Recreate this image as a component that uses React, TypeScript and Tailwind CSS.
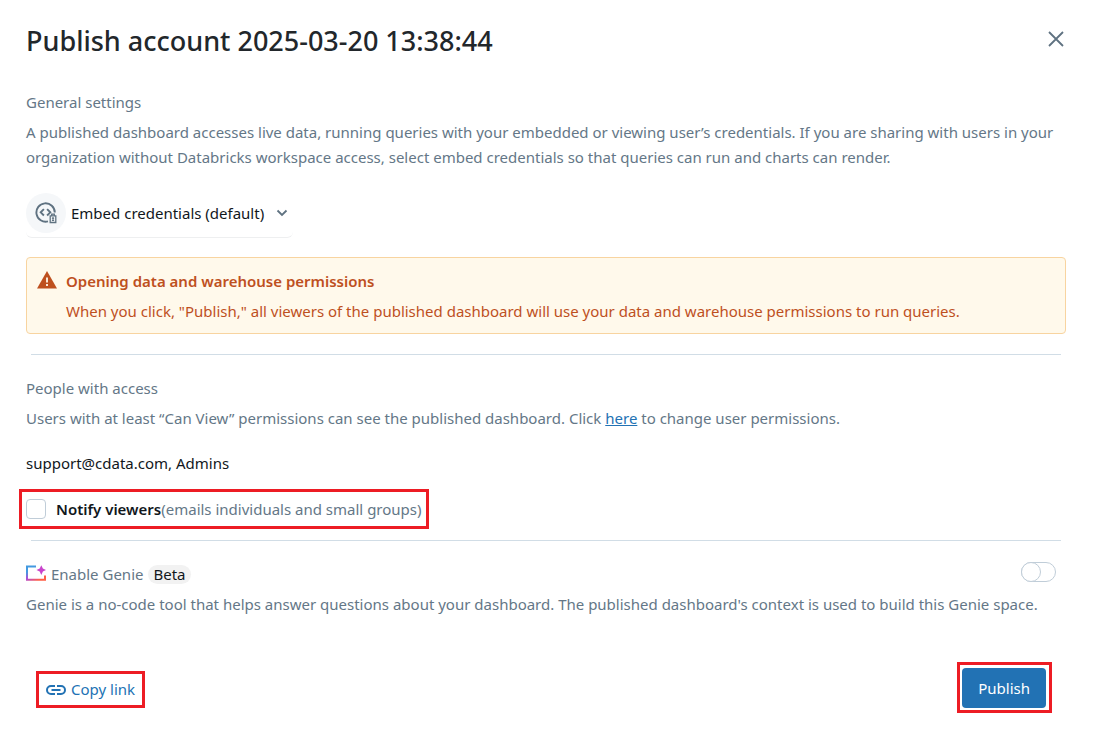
import React, { useState } from "react";

function CredentialsIcon() {
  return (
    <svg width="22" height="22" viewBox="0 0 22 22" fill="none" stroke="#5f7281" strokeWidth="1.9" aria-hidden="true">
      <path d="M13 19.4A9.2 9.2 0 1 1 19.8 10.5" />
      <path d="M8.9 7.1 5.7 10.3l3.2 3.2M12.1 7.1l3.2 3.2-3.2 3.2" />
      <path d="M15.2 13.8h5.6v6.7h-5.6zM16.7 13.6v-1.5h2.6v1.5" strokeWidth="1.3" />
      <path d="M18 15v4M16.9 16.3h2.2M16.9 18.5h2.2" strokeWidth="1.1" />
    </svg>
  );
}

function WarningIcon() {
  return (
    <svg className="shrink-0" width="20" height="18" viewBox="0 0 20 18" aria-hidden="true">
      <path d="M10 0 20 17.5H0z" fill="#be501e" />
      <path d="M9.1 6.5h1.8v5H9.1zM9.1 13h1.8v1.9H9.1z" fill="#fff9eb" />
    </svg>
  );
}

function GenieIcon() {
  return (
    <svg className="mb-1 shrink-0" width="20" height="16" viewBox="0 0 20 16" aria-hidden="true">
      <defs>
        <linearGradient id="genie" x1="2" y1="0" x2="14" y2="18" gradientUnits="userSpaceOnUse">
          <stop offset="0.25" stopColor="#4299e0" />
          <stop offset="0.5" stopColor="#b04ad8" />
          <stop offset="0.85" stopColor="#ff5f46" />
        </linearGradient>
      </defs>
      <path d="M10 1.4H1v13.4h18v-4.3" fill="none" stroke="url(#genie)" strokeWidth="2" />
      <path d="M15.3.2l1.6 3.2L20 5l-3.1 1.6-1.6 3.3-1.6-3.3L10.5 5l3.2-1.6z" fill="#c844cb" />
    </svg>
  );
}

function LinkIcon() {
  return (
    <svg width="20" height="10" viewBox="0 0 20 10" fill="none" stroke="#2272b4" strokeWidth="2" aria-hidden="true">
      <path d="M9 1H5a4 4 0 0 0 0 8h4M11 1h4a4 4 0 0 1 0 8h-4M5.5 5h9" />
    </svg>
  );
}

export default function App() {
  const [notify, setNotify] = useState(false);
  const [genie, setGenie] = useState(false);

  return (
    <main className="min-h-screen bg-white pt-5 pr-[27px] pb-5 pl-[26px] font-['Noto_Sans','Open_Sans',sans-serif] text-[15px] leading-[25px] text-[#647787]">
      <header className="flex items-start justify-between">
        <h1 className="text-[27px] leading-[42px] font-medium text-[#22272b]">Publish account 2025-03-20 13:38:44</h1>
        <button type="button" aria-label="Close" className="mr-0.5 flex h-[38px] w-4 items-center justify-center">
          <svg width="16" height="16" viewBox="0 0 16 16" stroke="#5f7281" strokeWidth="1.8" aria-hidden="true">
            <path d="m1 1 14 14M15 1 1 15" />
          </svg>
        </button>
      </header>

      <section className="mt-7">
        <h2>General settings</h2>
        <p className="mt-[5px]">
          A published dashboard accesses live data, running queries with your embedded or viewing user’s credentials. If
          you are sharing with users in your organization without Databricks workspace access, select embed credentials
          so that queries can run and charts can render.
        </p>
        <div className="mt-[23px] flex w-fit items-center rounded-md border-b border-[#eeeff0] pr-[5px] pb-1">
          <span className="flex size-10 items-center justify-center rounded-full bg-[#f5f7f9]">
            <CredentialsIcon />
          </span>
          <select aria-label="Credentials" className="ml-[5px] appearance-none bg-transparent text-[#11171c]">
            <option>Embed credentials (default)</option>
          </select>
          <svg className="ml-[11px]" width="12" height="8" viewBox="0 0 12 8" fill="none" stroke="#5f7281" strokeWidth="1.8" aria-hidden="true">
            <path d="m1.5 1.5 4.5 4.5 4.5-4.5" />
          </svg>
        </div>
        <div role="alert" className="mt-[19px] flex gap-[9px] rounded border border-[#f8d4a0] bg-[#fff9eb] px-2.5 pt-[11px] pb-[9px] text-[#be501e]">
          <div className="pt-0.5">
            <WarningIcon />
          </div>
          <div>
            <h3 className="font-semibold">Opening data and warehouse permissions</h3>
            <p className="mt-[5px]">
              When you click, "Publish," all viewers of the published dashboard will use your data and warehouse
              permissions to run queries.
            </p>
          </div>
        </div>
      </section>

      <hr className="mx-[5px] mt-5 border-[#d1dde6]" />

      <section className="mt-[21px]">
        <h2>People with access</h2>
        <p className="mt-[5px]">
          Users with at least “Can View” permissions can see the published dashboard. Click{" "}
          <a href="#permissions" className="text-[#2272b4] underline">here</a> to change user permissions.
        </p>
        <p className="mt-5 text-[#11171c]">support@cdata.com, Admins</p>
        <label className="mt-[13px] -ml-[7px] flex h-10 w-fit items-center border-3 border-[#ed1c24] px-1">
          <input
            type="checkbox"
            checked={notify}
            onChange={(e) => setNotify(e.target.checked)}
            className="mr-2.5 size-5 appearance-none rounded border border-[#c0cdd8] bg-white checked:bg-[#2272b4]"
          />
          <span className="font-semibold text-[#11171c]">Notify viewers</span>
          <span>(emails individuals and small groups)</span>
        </label>
      </section>

      <hr className="mx-[5px] mt-[11px] border-[#d1dde6]" />

      <section className="mt-[21px]">
        <div className="flex items-start justify-between">
          <h2 className="flex items-center gap-[5px]">
            <GenieIcon />
            <span>Enable Genie</span>
            <span className="rounded-full bg-[#f2f2f2] px-[5px] leading-[19px] text-[#11171c]">Beta</span>
          </h2>
          <button
            type="button"
            role="switch"
            aria-checked={genie}
            aria-label="Enable Genie"
            onClick={() => setGenie(!genie)}
            className={"mr-2.5 flex h-5 w-[35px] rounded-full border border-[#c0cdd8] " + (genie ? "justify-end bg-[#2272b4]" : "justify-start bg-white")}
          >
            <span className="-m-px size-5 rounded-full border border-[#c0cdd8] bg-white" />
          </button>
        </div>
        <p className="mt-[5px]">
          Genie is a no-code tool that helps answer questions about your dashboard. The published dashboard's context is
          used to build this Genie space.
        </p>
      </section>

      <footer className="mt-[45px] flex items-end justify-between pr-3.5 pl-2.5">
        <button type="button" className="mb-[5px] flex h-[37px] items-center gap-[5px] border-3 border-[#ed1c24] px-[7px] text-[#2272b4]">
          <LinkIcon />
          Copy link
        </button>
        <div className="border-3 border-[#ed1c24] pt-[3px] pr-[3px] pb-0.5 pl-0.5">
          <button type="button" className="h-10 rounded bg-[#2272b4] px-4 text-white">
            Publish
          </button>
        </div>
      </footer>
    </main>
  );
}
